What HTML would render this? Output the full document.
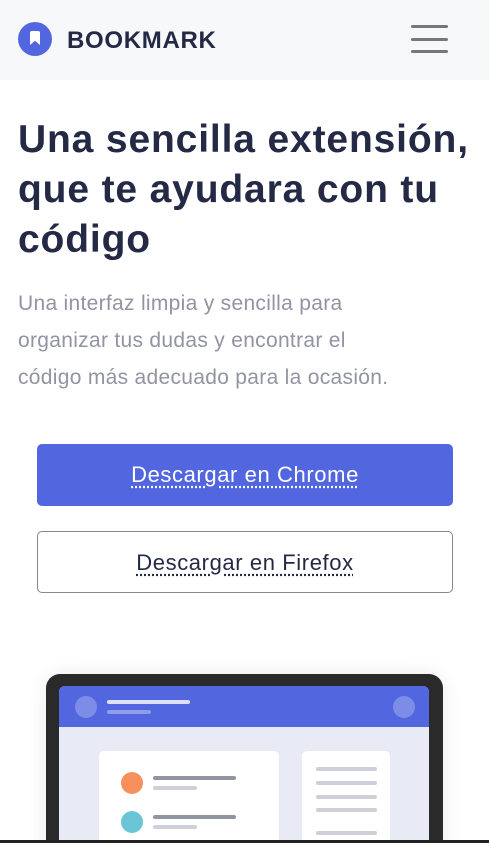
<!DOCTYPE html>
<html><head><meta charset="utf-8"><style>
*{margin:0;padding:0;box-sizing:border-box}
html,body{width:489px;height:843px;overflow:hidden}
body{background:#fff;font-family:"Liberation Sans",sans-serif;position:relative}
.nav{height:80px;background:#f7f8fa;position:relative}
.logo{position:absolute;left:18px;top:22px;width:34px;height:34px;border-radius:50%;background:#5267DF}
.logo:after{content:"";position:absolute;left:12px;top:9px;width:10px;height:14px;background:#fff;clip-path:polygon(0 0,100% 0,100% 100%,50% 70%,0 100%);border-radius:2px 2px 0 0}
.brand{position:absolute;left:67px;top:27px;font-size:24px;font-weight:bold;color:#242A45;letter-spacing:0.7px}
.hb{position:absolute;left:411px;width:37px;height:3px;background:#777;border-radius:2px}
h1{position:absolute;left:18px;top:115px;font-size:39px;line-height:50px;color:#242A45;font-weight:bold;letter-spacing:0.85px;white-space:nowrap}
p{position:absolute;left:18px;top:285px;width:420px;font-size:21px;line-height:37px;color:#9194A1;letter-spacing:0.3px}
.btn{position:absolute;left:37px;width:416px;height:62px;border-radius:5px;text-align:center;line-height:62px;font-size:22px;letter-spacing:0.6px}
.btn span{text-decoration:underline dotted;text-underline-offset:4px}
.c{top:444px;background:#5267DF;color:#fff}
.f{top:531px;border:1px solid #888;color:#242A45}
.lap{position:absolute;left:46px;top:674px;width:397px;height:200px;background:#2a2a2a;border-radius:14px;box-shadow:0 0 20px rgba(0,0,0,.08)}
.scr{position:absolute;left:59px;top:686px;width:370px;height:170px;background:#e8eaf6;border-radius:6px 6px 0 0;overflow:hidden}
.top{height:41px;background:#5267DF;position:relative}
.dot{position:absolute;width:22px;height:22px;border-radius:50%;background:rgba(255,255,255,.25)}
.bar{position:absolute;height:4px;border-radius:2px}
.card{position:absolute;background:#fff;border-radius:5px;top:65px}
.ci{position:absolute;width:22px;height:22px;border-radius:50%}
.bot{position:absolute;left:0;top:840px;width:489px;height:3px;background:#222}
</style></head><body>
<div class="nav"><div class="logo"></div><div class="brand">BOOKMARK</div>
<div class="hb" style="top:25px"></div><div class="hb" style="top:38px"></div><div class="hb" style="top:50px"></div></div>
<h1>Una sencilla extensión,<br>que te ayudara con tu<br>código</h1>
<p>Una interfaz limpia y sencilla para<br>organizar tus dudas y encontrar el<br>código más adecuado para la ocasión.</p>
<div class="btn c"><span>Descargar en Chrome</span></div>
<div class="btn f"><span>Descargar en Firefox</span></div>
<div class="lap"></div>
<div class="scr"><div class="top">
<div class="dot" style="left:16px;top:10px"></div><div class="dot" style="left:334px;top:10px"></div>
<div class="bar" style="left:48px;top:14px;width:83px;background:rgba(255,255,255,.8)"></div>
<div class="bar" style="left:48px;top:24px;width:44px;background:rgba(255,255,255,.35)"></div></div>
<div class="card" style="left:40px;width:180px;height:120px">
<div class="ci" style="left:22px;top:21px;background:#F7905C"></div>
<div class="ci" style="left:22px;top:60px;background:#6AC6D6"></div>
<div class="bar" style="left:54px;top:25px;width:83px;background:#9194A1"></div>
<div class="bar" style="left:54px;top:35px;width:44px;background:#cdd0d8"></div>
<div class="bar" style="left:54px;top:64px;width:83px;background:#9194A1"></div>
<div class="bar" style="left:54px;top:74px;width:44px;background:#cdd0d8"></div></div>
<div class="card" style="left:243px;width:88px;height:120px">
<div class="bar" style="left:14px;top:16px;width:61px;background:#cdd0d8"></div>
<div class="bar" style="left:14px;top:30px;width:61px;background:#cdd0d8"></div>
<div class="bar" style="left:14px;top:44px;width:61px;background:#cdd0d8"></div>
<div class="bar" style="left:14px;top:57px;width:61px;background:#cdd0d8"></div>
<div class="bar" style="left:14px;top:80px;width:61px;background:#cdd0d8"></div></div>
</div>
<div class="bot"></div>
</body></html>
